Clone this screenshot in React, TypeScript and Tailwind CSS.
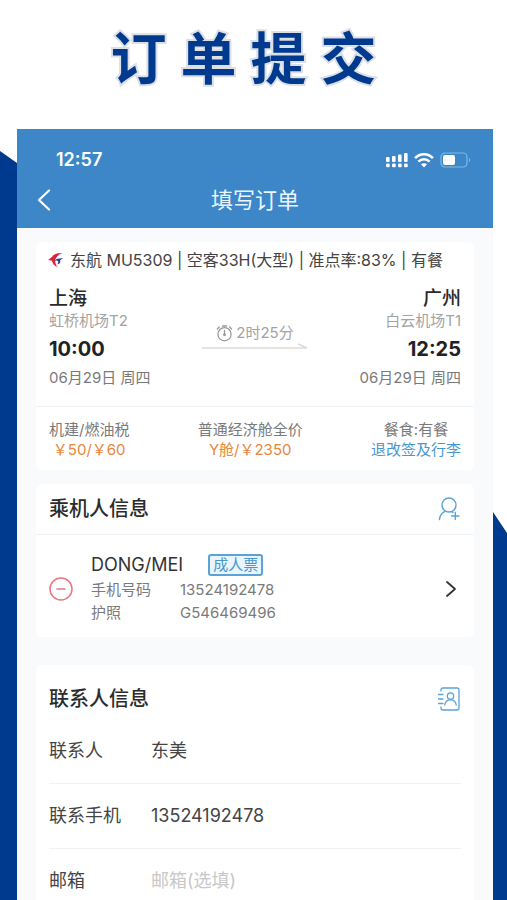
import type { ReactNode } from 'react';

const fees: { label: string; value: string; link?: boolean }[] = [
  { label: '机建/燃油税', value: '￥50/￥60' },
  { label: '普通经济舱全价', value: 'Y舱/￥2350' },
  { label: '餐食:有餐', value: '退改签及行李', link: true },
];

const contactFields = [
  { id: 'name', label: '联系人', value: '东美', type: 'text' },
  { id: 'phone', label: '联系手机', value: '13524192478', type: 'tel' },
  { id: 'email', label: '邮箱', value: '', type: 'email', placeholder: '邮箱(选填)' },
];

function Backdrop() {
  return (
    <svg className="absolute inset-0 w-full h-full" viewBox="0 0 507 900" preserveAspectRatio="none" aria-hidden="true">
      <path d="M0 151 L17 163 L493 512 L507 533 V900 H0 Z" fill="#003a8e" />
    </svg>
  );
}

function StatusIcons() {
  return (
    <div className="flex items-center gap-[6px]">
      <svg width="22" height="16" viewBox="0 0 22 16" fill="#fff" aria-hidden="true">
        <rect x="0" y="5" width="3.6" height="5" rx="1" />
        <rect x="6" y="4" width="3.6" height="6" rx="1" />
        <rect x="12" y="2.5" width="3.6" height="7.5" rx="1" />
        <rect x="18" y="1" width="3.6" height="9" rx="1" />
        <rect x="0" y="11.5" width="3.8" height="3.8" rx="1.4" />
        <rect x="6" y="11.5" width="3.8" height="3.8" rx="1.4" />
        <rect x="12" y="11.5" width="3.8" height="3.8" rx="1.4" />
        <rect x="18" y="11.5" width="3.8" height="3.8" rx="1.4" />
      </svg>
      <svg width="20" height="16" viewBox="0 0 20 16" fill="none" stroke="#fff" strokeWidth="2.5" aria-hidden="true">
        <path d="M1 6.2 C6 0.8 14 0.8 19 6.2" />
        <path d="M4.4 9.6 C7.6 6.4 12.4 6.4 15.6 9.6" />
        <path d="M10 15.4 L7 12.3 C8.8 10.8 11.2 10.8 13 12.3 Z" fill="#fff" stroke="none" />
      </svg>
      <svg width="31" height="16" viewBox="0 0 31 16" fill="none" aria-hidden="true">
        <rect x="1" y="1" width="26" height="14" rx="4" stroke="#7fb9e6" strokeWidth="1.2" />
        <rect x="3" y="3" width="12" height="10" rx="2" fill="#fff" />
        <path d="M29 6 C30.6 6.6 30.6 9.4 29 10 Z" fill="#7fb9e6" />
      </svg>
    </div>
  );
}

function AirlineLogo() {
  return (
    <svg width="16" height="16" viewBox="0 0 16 16" className="shrink-0" aria-hidden="true">
      <path d="M14.5 1 C10 0.6 6 1.6 4.4 4.6 L0.2 8 L4 8.8 C4.4 11.6 6.4 14.2 9.6 15 C7.8 12.6 6.8 10 7.4 7.8 C8.2 4.8 10.6 2.4 14.5 1 Z" fill="#d7263d" />
      <path d="M15 6.4 C11.6 6.2 8.6 7 6.6 8.8 C8.4 8.2 9.8 8.4 10.2 9.4 C10.6 10.6 9.8 11.8 8.6 12.4 C11.4 12.2 13 10.4 12 8.4 C12.8 7.4 13.8 6.8 15 6.4 Z" fill="#2b3a94" />
    </svg>
  );
}

function Card({ children }: { children: ReactNode }) {
  return <section className="bg-white rounded-md">{children}</section>;
}

function Endpoint({ city, airport, time, right }: { city: string; airport: string; time: string; right?: boolean }) {
  return (
    <div className={right ? 'text-right' : 'text-left'}>
      <div className="text-[19px] leading-6 font-medium text-[#2b2b2b]">{city}</div>
      <div className="text-[15px] leading-5 text-[#a3a3a3]">{airport}</div>
      <div className="mt-[6px] text-[20px] leading-6 font-bold text-[#222]">{time}</div>
      <div className="mt-[7px] text-[15px] leading-5 text-[#7a7a7a]">06月29日 周四</div>
    </div>
  );
}

export default function App() {
  return (
    <div className="relative flex flex-col min-h-screen bg-white overflow-hidden font-['Inter','Noto_Sans_CJK_SC',sans-serif]">
      <Backdrop />

      <h1 className="relative flex justify-center gap-[14px] h-[129px] pt-[14px] pr-5 text-[56px] leading-[90px] font-bold text-[#003a8e] [-webkit-text-stroke:4px_#dcdfe6] [paint-order:stroke_fill]">
        {'订单提交'.split('').map((c) => (
          <span key={c}>{c}</span>
        ))}
      </h1>

      <main className="relative flex flex-col flex-1 ml-[17px] mr-[14px] bg-[#f8fafc]">
        <header className="h-[99px] bg-[#3d87c9] text-white">
          <div className="flex items-center justify-between h-[50px] pt-3 pl-[39px] pr-[22px]">
            <span className="text-[18px] leading-6 font-semibold">12:57</span>
            <StatusIcons />
          </div>
          <div className="grid grid-cols-[40px_1fr_40px] items-center h-[42px]">
            <button type="button" aria-label="返回" className="pl-5">
              <svg width="14" height="22" viewBox="0 0 14 22" fill="none" stroke="#fff" strokeWidth="2.2" strokeLinecap="round" strokeLinejoin="round">
                <path d="M12 1.5 L2 11 L12 20.5" />
              </svg>
            </button>
            <h2 className="text-center text-[22px] leading-8 text-[#eaf6ff]">填写订单</h2>
          </div>
        </header>

        <div className="flex flex-col flex-1 px-[19px] pt-[14px]">
          <Card>
            <div className="flex items-center gap-[6px] pt-[6px] pl-3 text-[16px] leading-6 text-[#444] whitespace-nowrap">
              <AirlineLogo />
              <span>东航 MU5309 | 空客33H(大型) | 准点率:83% | 有餐</span>
            </div>
            <div className="flex justify-between px-[13px] pt-[15px] pb-[18px]">
              <Endpoint city="上海" airport="虹桥机场T2" time="10:00" />
              <div className="w-[106px] pt-9">
                <div className="flex items-center justify-center gap-[3px] text-[15px] leading-5 text-[#a3a3a3]">
                  <svg width="17" height="17" viewBox="0 0 17 17" fill="none" stroke="#999" strokeWidth="1.3" strokeLinecap="round" aria-hidden="true">
                    <circle cx="8.5" cy="9.2" r="6.6" />
                    <path d="M8.5 5.5 V10 M6.5 1 H10.5 M13.6 2 L15.6 4 M3.2 2 L1.4 4" />
                    <circle cx="8.5" cy="9.8" r="0.8" fill="#999" />
                  </svg>
                  2时25分
                </div>
                <svg className="w-full h-[7px]" viewBox="0 0 106 7" fill="none" stroke="#dcdcdc" strokeWidth="1.5" aria-hidden="true">
                  <path d="M0 5 H105 L96 1" />
                </svg>
              </div>
              <Endpoint city="广州" airport="白云机场T1" time="12:25" right />
            </div>
            <div className="flex justify-between px-[13px] pt-[13px] pb-[10px] border-t border-[#f0f2f4] text-[15px] leading-5 text-center">
              {fees.map((fee) => (
                <div key={fee.label} className="flex flex-col">
                  <span className="text-[#7a7a7a]">{fee.label}</span>
                  {fee.link ? (
                    <a href="#rules" className="text-[#4898d0]">{fee.value}</a>
                  ) : (
                    <span className="text-[#e6873c]">{fee.value}</span>
                  )}
                </div>
              ))}
            </div>
          </Card>

          <div className="h-[14px]" />

          <Card>
            <div className="flex items-center justify-between h-[50px] px-[13px]">
              <h3 className="text-[20px] leading-7 font-medium text-[#2b2b2b]">乘机人信息</h3>
              <button type="button" aria-label="添加乘机人">
                <svg width="24" height="24" viewBox="0 0 24 24" fill="none" stroke="#5ba3d6" strokeWidth="1.4" strokeLinecap="round">
                  <circle cx="12" cy="8" r="7" />
                  <path d="M2.4 22.6 C2.8 19 4.8 16 8 14.4 M14.5 14.6 L16 15.4 M14.6 19 H22 M18.3 15.4 V22.6" />
                </svg>
              </button>
            </div>
            <div className="flex items-center px-[13px] pt-[18px] pb-[13px] border-t border-[#f0f2f4]">
              <button type="button" aria-label="删除乘机人" className="mr-[18px]">
                <svg width="24" height="24" viewBox="0 0 24 24" fill="none" stroke="#e8757f" strokeWidth="1.5" strokeLinecap="round">
                  <circle cx="12" cy="12" r="11" />
                  <path d="M8 12 H16" />
                </svg>
              </button>
              <div className="flex-1">
                <div className="flex items-center gap-[25px]">
                  <span className="text-[18px] leading-6 text-[#333]">DONG/MEI</span>
                  <span className="px-[3px] border-2 border-[#5ba3d6] rounded-[3px] bg-[#e9f5fd] text-[15px] leading-[18px] text-[#4898d0]">成人票</span>
                </div>
                <dl className="grid grid-cols-[89px_1fr] mt-px text-[15px] leading-[23px] text-[#7a7a7a]">
                  <dt>手机号码</dt>
                  <dd>13524192478</dd>
                  <dt>护照</dt>
                  <dd>G546469496</dd>
                </dl>
              </div>
              <button type="button" aria-label="编辑乘机人" className="pr-1">
                <svg width="12" height="18" viewBox="0 0 12 18" fill="none" stroke="#333" strokeWidth="1.8" strokeLinecap="round" strokeLinejoin="round">
                  <path d="M2 2 L10 9 L2 16" />
                </svg>
              </button>
            </div>
          </Card>

          <div className="h-7" />

          <section className="flex-1 px-[13px] rounded-t-md bg-white">
            <div className="flex items-center justify-between pt-5">
              <h3 className="text-[20px] leading-7 font-medium text-[#2b2b2b]">联系人信息</h3>
              <button type="button" aria-label="通讯录">
                <svg width="24" height="24" viewBox="0 0 24 24" fill="none" stroke="#5ba3d6" strokeWidth="1.3" strokeLinecap="round">
                  <path d="M4 4 V3 Q4 1 6 1 H20 Q22 1 22 3 V21 Q22 23 20 23 H6 Q4 23 4 21 V20" />
                  <path d="M1.5 7.5 H6 M1.5 12 H6 M1.5 16.5 H6" />
                  <circle cx="13.5" cy="9" r="3.2" />
                  <path d="M7.8 18 C8.2 14.6 10.4 12.8 13.5 12.8 C16.6 12.8 18.8 14.6 19.2 18" />
                </svg>
              </button>
            </div>
            <form className="mt-[6px]">
              {contactFields.map((f) => (
                <div key={f.id} className="flex items-center pt-5 pb-5 border-b border-[#f0f2f4] last:border-0 last:pb-1">
                  <label htmlFor={f.id} className="w-[102px] shrink-0 text-[18px] leading-6 text-[#444]">{f.label}</label>
                  <input
                    id={f.id}
                    type={f.type}
                    defaultValue={f.value}
                    placeholder={f.placeholder}
                    className="flex-1 min-w-0 text-[18px] leading-6 text-[#444] bg-transparent outline-none placeholder:text-[#c8c8c8]"
                  />
                </div>
              ))}
            </form>
          </section>
        </div>
      </main>
    </div>
  );
}
